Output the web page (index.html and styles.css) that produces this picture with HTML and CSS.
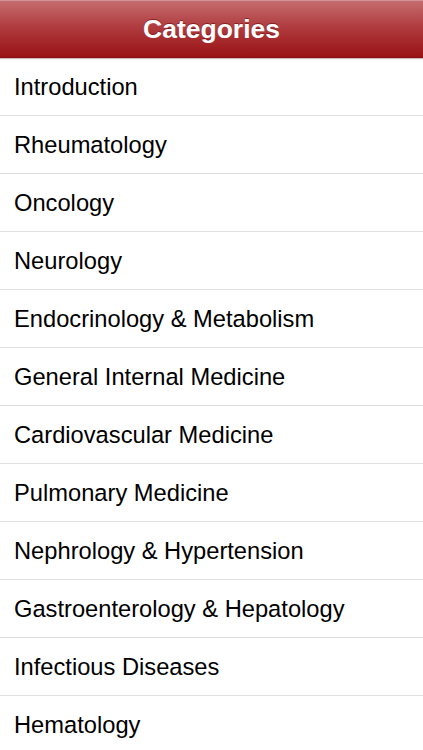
FILE: index.html
```html
<!DOCTYPE html>
<html>
    <head>
        <title>Categories</title>
        <link rel="stylesheet" href="styles.css">
    </head>
    <body>
        <div class="nav-bar">
            <h1 class="nav-title">Categories</h1>
        </div>
        <ul class="cat-list">
            <li class="cat-item">Introduction</li>
            <li class="cat-item">Rheumatology</li>
            <li class="cat-item">Oncology</li>
            <li class="cat-item">Neurology</li>
            <li class="cat-item">Endocrinology &amp; Metabolism</li>
            <li class="cat-item">General Internal Medicine</li>
            <li class="cat-item">Cardiovascular Medicine</li>
            <li class="cat-item">Pulmonary Medicine</li>
            <li class="cat-item">Nephrology &amp; Hypertension</li>
            <li class="cat-item">Gastroenterology &amp; Hepatology</li>
            <li class="cat-item">Infectious Diseases</li>
            <li class="cat-item">Hematology</li>
        </ul>
    </body>
</html>
```
FILE: styles.css
```css
body {
    margin: 0;
    background: #fff;
    font-family: "Liberation Sans", Arial, sans-serif;
    overflow: hidden;
}
.nav-bar {
    height: 58px;
    display: flex;
    align-items: center;
    justify-content: center;
    background: linear-gradient(#c56c6e, #b03c3f 45%, #9a1315 97%, #7d1012);
    border-top: 1px solid #d39597;
    box-sizing: border-box;
    box-shadow: 0 1px 1px rgba(120, 20, 20, 0.3);
    position: relative;
    z-index: 1;
}
.nav-title {
    margin: 0;
    color: #fff;
    font-size: 26.5px;
    font-weight: bold;
    text-shadow: 0 -1px 0 rgba(80, 0, 0, 0.5);
}
.cat-list {
    list-style: none;
    margin: 0;
    padding: 0;
}
.cat-item {
    height: 57px;
    box-sizing: border-box;
    height: 58px;
    border-bottom: 1px solid #e0e0e0;
    padding: 2px 0 0 14px;
    display: flex;
    align-items: center;
    font-size: 23.7px;
    color: #000;
}
```
